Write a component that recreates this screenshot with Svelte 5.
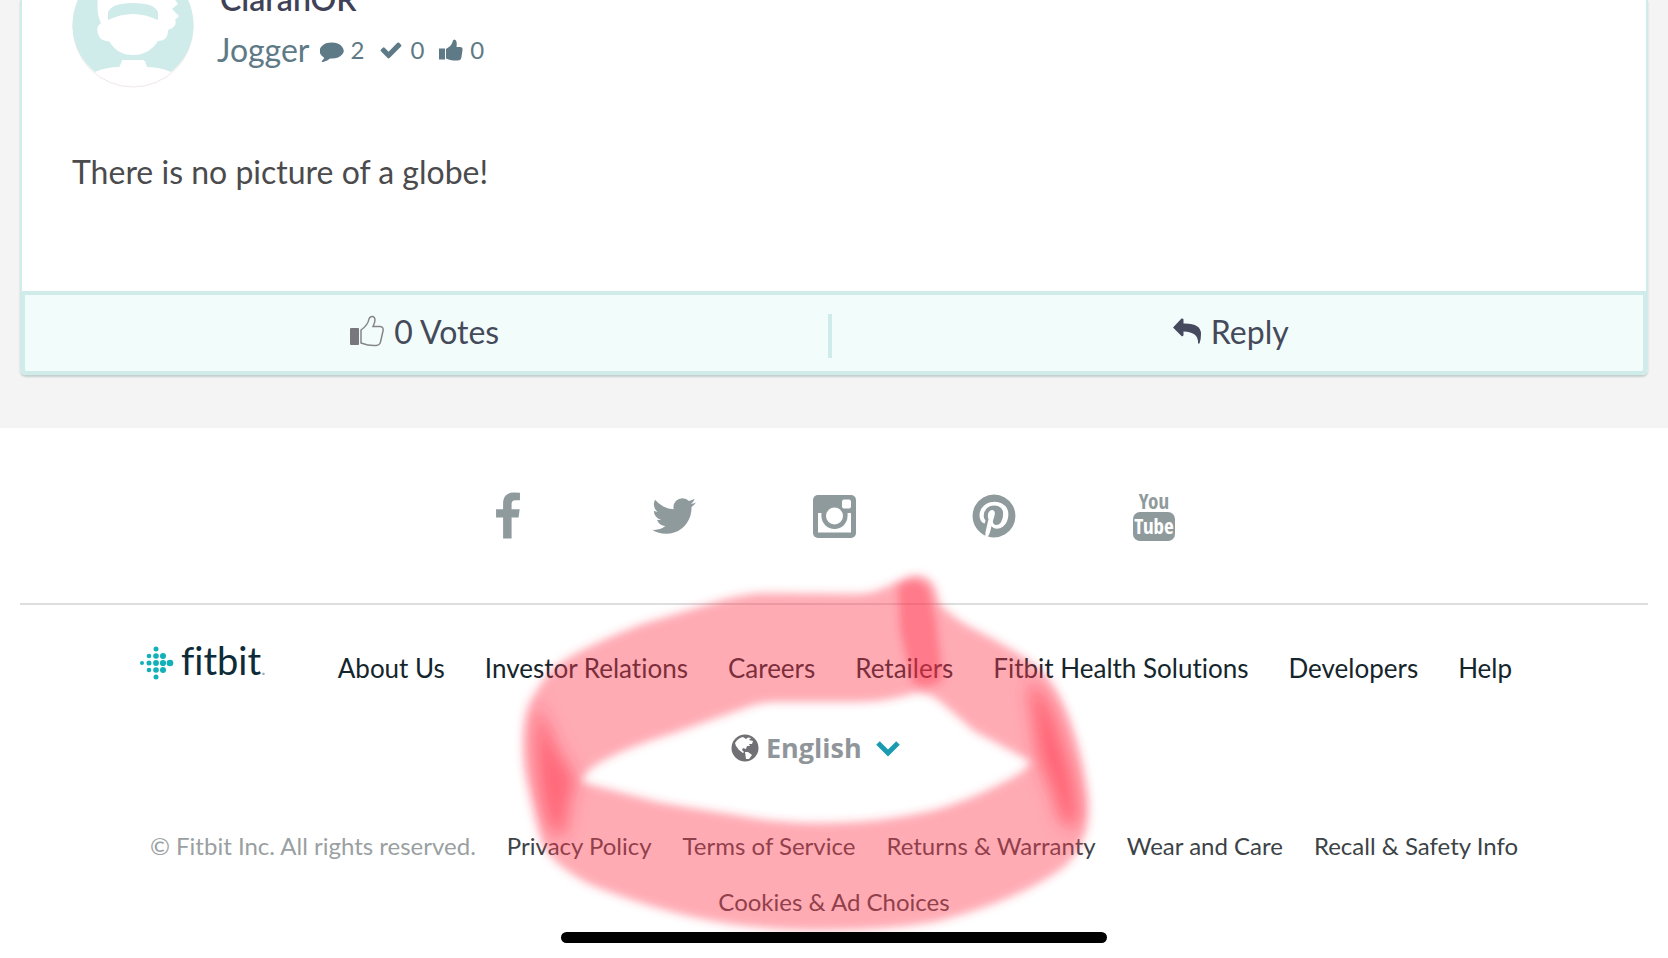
<script>
  let language = $state('English');

  const navLinks = [
    'About Us',
    'Investor Relations',
    'Careers',
    'Retailers',
    'Fitbit Health Solutions',
    'Developers',
    'Help'
  ];

  const legalLinks = [
    'Privacy Policy',
    'Terms of Service',
    'Returns & Warranty',
    'Wear and Care',
    'Recall & Safety Info',
    'Cookies & Ad Choices'
  ];

  // x, y, radius
  const logoDots = [
    [16, 3, 2.5],
    [9, 10, 2.3], [16, 10, 2.8], [23, 10, 3],
    [2, 17, 2], [9, 17, 2.5], [16, 17, 2.9], [23, 17, 3.1], [30, 17, 3.3],
    [9, 24, 2.3], [16, 24, 2.8], [23, 24, 3],
    [16, 31, 2.5]
  ];
</script>

<div class="page">
  <main class="thread">
    <article class="card">
      <div class="post">
        <header class="author">
          <svg class="avatar" viewBox="0 0 122 122" aria-hidden="true">
            <circle cx="61" cy="61" r="60" fill="#fff" stroke="#efe6e8" />
            <path d="M23 106A60.500 60.500 0 1 1 99 106Q88 101 74 101Q72 98 72 94H50Q50 98 48 101Q34 101 23 106Z" fill="#cfebea" />
            <path d="M26 30Q24 48 29 57Q22 62 28 72Q32 76 37 75Q45 89 61 89Q77 89 86 75Q96 75 96 64Q106 60 103 54L107 50L100 43L106 38L99 28L90 18H36Z" fill="#fff" />
            <path d="M36 54V47Q38 37 61 37Q84 37 86 47V54Q61 42 36 54Z" fill="#cfebea" />
            <path d="M50 95L58 96L61 102L65 96L73 95L76 104H46Z" fill="#fff" />
          </svg>
          <div class="who">
            <a class="name" href="#author">CiaranOR</a>
            <div class="rank">
              <span>Jogger</span>
              <span class="stat">
                <svg width="24" height="24" viewBox="0 0 1792 1792" aria-label="posts"><path d="M1792 896q0 174-120 321.500t-326 233-450 85.500q-70 0-145-8-198 175-460 242-49 14-114 22-17 2-30.500-9t-17.500-29q-3-18 27-50 60-66 94-112t62-124q-157-89-247.500-220t-90.500-281q0-130 71-248.500t191-204.500 286-136.500 348-50.500q244 0 450 85.500t326 233 120 321.500z" /></svg>
                2
              </span>
              <span class="stat">
                <svg width="24" height="24" viewBox="0 0 1792 1792" aria-label="solutions"><path d="M1671 566q0 40-28 68l-724 724-136 136q-28 28-68 28t-68-28l-136-136-362-362q-28-28-28-68t28-68l136-136q28-28 68-28t68 28l294 295 656-657q28-28 68-28t68 28l136 136q28 28 28 68z" /></svg>
                0
              </span>
              <span class="stat">
                <svg width="24" height="24" viewBox="0 0 24 24" aria-label="votes"><path d="M0 10.500h6V21.500H0zM7 11C10 9 13 7 13.500 4Q13.500 1.500 15.500 1.500Q18.500 2 17.500 9H21Q24 9 23.500 12L22.500 19Q22 22.500 18.500 22.500H14Q10 22 7 20.500Z" /></svg>
                0
              </span>
            </div>
          </div>
        </header>
        <p class="message">There is no picture of a globe!</p>
      </div>

      <div class="actions">
        <button class="action" type="button">
          <svg width="36" height="32" viewBox="0 0 36 32" aria-hidden="true">
            <rect x="1" y="13" width="9" height="17" rx="1" fill="#78787c" />
            <path d="M12 15Q19 10 20 4Q21 1 24 1.500Q28 3 24 11.500L31 11.500Q35 12 34 16L31.500 27Q31 30 27 30.500Q20 31 12 28Z" fill="none" stroke="#858589" stroke-width="1.500" />
          </svg>
          0 Votes
        </button>
        <span class="divider"></span>
        <button class="action" type="button">
          <svg width="29" height="26" viewBox="0 0 29 26" aria-hidden="true">
            <path d="M0 9.500L8.500 .5Q10 0 10.500 1.500V5.500Q28 5 28 16Q28 22 26.500 25.500L25 25.500Q26 14 10.500 13.500V17Q10 19 8.500 18Z" fill="#454a5e" />
          </svg>
          Reply
        </button>
      </div>
    </article>
  </main>

  <footer class="footer">
    <nav class="social" aria-label="Social">
      <a href="#facebook" aria-label="Facebook">
        <svg width="44" height="47" viewBox="332 0 1592 1664"><path d="M1343 12v264h-157q-86 0-116 36t-30 108v189h293l-39 296h-254v759h-306v-759h-255v-296h255v-218q0-186 104-288.500t277-102.500q147 0 228 12z" /></svg>
      </a>
      <a href="#twitter" aria-label="Twitter">
        <svg width="50" height="50" viewBox="0 0 1792 1792"><path d="M1684 408q-67 98-162 167 1 14 1 42 0 130-38 259.500t-115.500 248.500-184.500 210.500-258 146-323 54.500q-271 0-496-145 35 4 78 4 225 0 401-138-105-2-188-64.500t-114-159.500q33 5 61 5 43 0 85-11-112-23-185.500-111.500t-73.500-205.500v-4q68 38 146 41-66-44-105-115t-39-154q0-88 44-163 121 149 294.500 238.500t371.500 99.500q-8-38-8-74 0-134 94.500-228.500t228.500-94.500q140 0 236 102 109-21 205-78-37 115-142 178 93-10 186-50z" /></svg>
      </a>
      <a href="#instagram" aria-label="Instagram">
        <svg width="44" height="44" viewBox="0 0 44 44">
          <rect x="1" y="1" width="43" height="43" rx="5" />
          <path d="M6 19H9.500A13 13 0 1 0 35.500 19H39V38.500H6Z" fill="#fff" />
          <circle cx="22.500" cy="22" r="13" />
          <circle cx="22.500" cy="22" r="8.500" fill="#fff" />
          <rect x="30" y="5.500" width="9" height="9" rx="2" fill="#fff" />
        </svg>
      </a>
      <a href="#pinterest" aria-label="Pinterest">
        <svg width="50" height="50" viewBox="0 0 1792 1792"><path d="M1664 896q0 209-103 385.500t-279.500 279.500-385.500 103q-111 0-218-32 59-93 78-164 9-34 54-211 20 39 73 67.500t114 28.500q121 0 216-68.500t147-188.500 52-270q0-114-59.500-214t-172.500-163-255-63q-105 0-196 29t-154.500 77-109 110.500-67 129.500-21.500 134q0 104 40 183t117 111q30 12 38-20 2-7 8-31t8-30q6-23-11-43-51-61-51-151 0-151 104.500-259.500t273.500-108.500q151 0 235.500 82t84.500 213q0 170-68.500 289t-175.500 119q-61 0-98-43.500t-23-104.500q8-35 26.500-93.500t30-103 11.500-75.500q0-50-27-83t-77-33q-62 0-105 57t-43 142q0 73 25 122l-99 418q-17 70-13 177-206-91-333-281t-127-423q0-209 103-385.500t279.500-279.500 385.500-103 385.500 103 279.500 279.500 103 385.500z" /></svg>
      </a>
      <a class="youtube" href="#youtube">
        <span>You</span>
        <span class="tube">Tube</span>
      </a>
    </nav>

    <div class="site">
      <div class="primary">
        <a class="logo" href="#home">
          <svg width="34" height="34" viewBox="0 0 34 34" aria-hidden="true">
            {#each logoDots as [x, y, r]}
              <circle cx={x} cy={y} {r} />
            {/each}
          </svg>
          <span>fitbit<i>.</i></span>
        </a>
        <nav class="links" aria-label="Company">
          {#each navLinks as link}
            <a href="#company">{link}</a>
          {/each}
        </nav>
      </div>

      <div class="language">
        <svg width="28" height="28" viewBox="0 0 28 28" aria-hidden="true">
          <circle cx="14" cy="14" r="13.500" fill="#717175" />
          <path d="M4 9Q7 4 12 3L15 5L17 3.500L20 4L18 6L22 7L21 10L18 10L19 12L16 12L15 15L12 14L11 16L13 18L12 19L8 16L5 12Z" fill="#fff" />
          <path d="M14 18L17 18L21 21L18 25L15 25Z" fill="#fff" />
        </svg>
        <select bind:value={language} aria-label="Language">
          <option>English</option>
        </select>
        <svg width="26" height="18" viewBox="0 0 26 18" aria-hidden="true">
          <path d="M3 4L13 14L23 4" fill="none" stroke="#1a9bb0" stroke-width="5" />
        </svg>
      </div>

      <div class="legal">
        <span>© Fitbit Inc. All rights reserved.</span>
        {#each legalLinks as link}
          <a href="#legal">{link}</a>
        {/each}
      </div>

      <!-- Highlighter ring around the language picker -->
      <svg class="marker" width="600" height="390" viewBox="510 560 600 390" aria-hidden="true">
        <defs>
          <filter id="soft" x="-20%" y="-10%" width="140%" height="120%"><feGaussianBlur stdDeviation="4" /></filter>
          <filter id="softer" x="-80%" y="-20%" width="260%" height="140%"><feGaussianBlur stdDeviation="9" /></filter>
        </defs>
        <path filter="url(#soft)" fill="#ff3c50" fill-opacity=".43" fill-rule="evenodd" d="M915 575C905 577 892 585 879 590Q868 594 856 594L761 593Q735 595 709 604L642 624Q600 640 571 656Q550 668 540 685Q526 705 524 730Q521 760 530 792L540 835Q545 862 591 885Q666 915 737 925Q840 937 935 922Q1014 902 1060 870Q1090 848 1088 800Q1083 760 1073 730Q1062 695 1045 675Q1030 657 970 627Q952 617 939 603Q936 575 915 575ZM581 782Q583 773 599 763Q625 748 674 733L745 708Q760 702 777 702H860Q885 702 915 693Q930 692 942 703L974 731L1032 762Q1020 775 1006 781Q970 800 935 810Q875 824 816 823Q770 822 737 815Q690 808 658 802Z" />
        <path filter="url(#soft)" fill="#ff3048" fill-opacity=".4" d="M898 586Q915 574 928 588L936 620L943 680Q925 692 912 682L900 630Z" />
        <path filter="url(#softer)" fill="#ff3048" fill-opacity=".55" d="M536 700L558 750L577 782Q568 795 566 832Q555 843 548 825Q532 785 536 700Z" />
        <path filter="url(#softer)" fill="#ff3048" fill-opacity=".6" d="M1028 680Q1048 690 1062 740Q1080 790 1078 825Q1062 835 1055 800L1038 755Z" />
      </svg>
    </div>

    <div class="home-bar"></div>
  </footer>
</div>

<style>
  :global(body) {
    margin: 0;
    background: #fff;
    overflow: hidden;
  }

  .page {
    font-family: Lato, 'Open Sans', sans-serif;
    font-size: 32px;
    font-variant-ligatures: none;
    overflow: hidden;
  }

  a {
    color: inherit;
    text-decoration: none;
  }

  .thread {
    background: #f4f4f4;
    padding: 0 20px 53px;
  }

  .card {
    background: #fff;
    border-radius: 0 0 6px 6px;
    box-shadow: 0 2px 2px rgba(0, 60, 60, 0.2);
    overflow: hidden;
  }

  .post {
    border: 2px solid #cfebea;
    border-width: 0 2px;
    padding: 0 50px 98px 50px;
  }

  .author {
    display: flex;
    gap: 23px;
    margin-top: -34px;
    height: 122px;
  }

  .avatar {
    width: 122px;
    height: 122px;
    flex-shrink: 0;
  }

  .who {
    padding-top: 13px;
  }

  .name {
    display: block;
    color: #3f4257;
    font-weight: 600;
    line-height: 40px;
    padding-left: 3px;
  }

  .rank {
    display: flex;
    align-items: center;
    gap: 10px;
    color: #5d7a86;
    line-height: 40px;
    padding-top: 11px;
  }

  .stat {
    display: flex;
    align-items: center;
    gap: 7px;
    font-size: 24px;
    margin-right: 5px;
  }

  .stat svg {
    fill: #5d7a86;
  }

  .message {
    margin: 63px 0 0;
    color: #4b4b4d;
    line-height: 42px;
  }

  .actions {
    display: flex;
    align-items: center;
    height: 76px;
    padding-right: 9px;
    background: #f2fcfb;
    border: 4px solid #cfebea;
    border-width: 4px 5px;
    border-radius: 0 0 6px 6px;
  }

  .action {
    flex: 1;
    display: flex;
    align-items: center;
    justify-content: center;
    gap: 9px;
    border: 0;
    padding: 0 4px 4px 0;
    background: none;
    color: #454a5a;
    font: inherit;
    cursor: pointer;
  }

  .divider {
    width: 4px;
    height: 44px;
    margin-top: 6px;
    background: #cfebea;
  }

  .footer {
    background: #fff;
    padding: 0 20px 14px;
  }

  .social {
    display: flex;
    justify-content: center;
    gap: 116px;
    height: 175px;
    border-bottom: 2px solid #dcdedf;
  }

  .social a {
    width: 44px;
    display: flex;
    align-items: center;
    justify-content: center;
  }

  .social svg {
    flex-shrink: 0;
    fill: #8f9a9d;
  }

  .social .youtube {
    flex-direction: column;
    color: #8f9a9d;
    font: bold 21px/22px 'Liberation Sans Narrow', 'Open Sans Condensed', 'DejaVu Sans Condensed', sans-serif;
  }

  .tube {
    width: 42px;
    height: 29px;
    border-radius: 7px;
    background: #8f9a9d;
    color: #fff;
    line-height: 29px;
    text-align: center;
  }

  .site {
    position: relative;
  }

  .primary {
    display: flex;
    justify-content: center;
    gap: 72px;
    margin-right: 16px;
    padding-top: 38px;
  }

  .logo {
    display: flex;
    align-items: center;
    gap: 7px;
    height: 40px;
    color: #0d2b38;
    font-size: 38px;
    line-height: 40px;
  }

  .logo svg {
    fill: #12b0b9;
  }

  .logo i {
    color: #9fb0b5;
    font-size: 20px;
    font-style: normal;
  }

  .links {
    display: flex;
    gap: 40px;
    padding-top: 9px;
    color: #14252b;
    font-size: 26px;
    line-height: 32px;
  }

  .language {
    display: flex;
    align-items: center;
    justify-content: center;
    gap: 7px;
    padding-top: 46px;
    margin-right: 36px;
  }

  .language select {
    appearance: none;
    border: 0;
    padding: 0;
    width: 102px;
    background: none;
    color: #8f9599;
    font: bold 27px/36px 'Open Sans', sans-serif;
  }

  .legal {
    display: flex;
    flex-wrap: wrap;
    justify-content: center;
    gap: 24px 31px;
    max-width: 1420px;
    margin: 0 auto;
    padding-top: 64px;
    color: #3c4347;
    font-size: 24px;
    line-height: 32px;
  }

  .legal span {
    color: #9a9fa2;
  }

  .marker {
    position: absolute;
    top: -45px;
    left: 50%;
    margin-left: -324px;
    pointer-events: none;
  }

  .home-bar {
    position: relative;
    width: 546px;
    max-width: 80%;
    height: 11px;
    margin: 14px auto 0;
    border-radius: 6px;
    background: #000;
  }
</style>
